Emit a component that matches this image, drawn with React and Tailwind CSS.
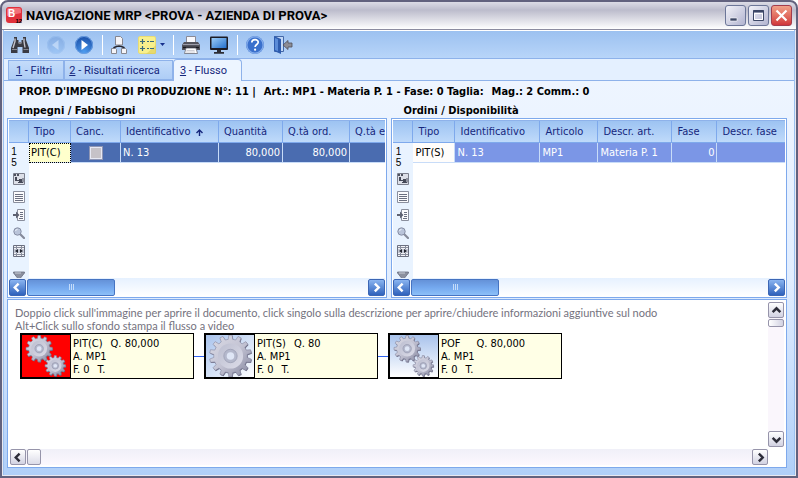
import React from "react";

function gearPath(cx, cy, inner, outer, teeth) {
  const pts = [];
  const step = (Math.PI * 2) / teeth;
  for (let i = 0; i < teeth; i++) {
    const a = i * step - Math.PI / 2;
    [
      [-0.3, inner],
      [-0.18, outer],
      [0.18, outer],
      [0.3, inner],
    ].forEach(([k, r]) => {
      const t = a + k * step;
      pts.push(`${(cx + Math.cos(t) * r).toFixed(2)} ${(cy + Math.sin(t) * r).toFixed(2)}`);
    });
  }
  return `M${pts.join("L")}Z`;
}

function Gear({ cx, cy, r, teeth }) {
  return (
    <g>
      <path d={gearPath(cx + 0.6, cy + 0.8, r * 0.8, r, teeth)} fill="#66667e" />
      <path d={gearPath(cx, cy, r * 0.8, r, teeth)} fill="url(#steel)" stroke="#8486a0" strokeWidth="0.6" />
      <circle cx={cx} cy={cy} r={r * 0.6} fill="url(#steelInner)" />
      <circle cx={cx} cy={cy} r={r * 0.32} fill="#b4b8cc" stroke="#9094aa" strokeWidth="0.6" />
      <circle cx={cx} cy={cy} r={r * 0.18} fill="#dfe6f6" />
    </g>
  );
}

function GearPicture({ kind }) {
  return (
    <svg viewBox="0 0 49 43" className="block h-full w-full">
      <defs>
        <linearGradient id="steel" x1="0" y1="0" x2="1" y2="1">
          <stop offset="0" stopColor="#dcdce6" />
          <stop offset="0.5" stopColor="#c4c4d4" />
          <stop offset="1" stopColor="#84869e" />
        </linearGradient>
        <linearGradient id="steelInner" x1="1" y1="1" x2="0" y2="0">
          <stop offset="0" stopColor="#dcdce8" />
          <stop offset="1" stopColor="#bcbed0" />
        </linearGradient>
      </defs>
      {kind === "single" ? (
        <Gear cx={25} cy={21.5} r={21.5} teeth={14} />
      ) : (
        <>
          <Gear cx={17.5} cy={14} r={13.5} teeth={12} />
          <Gear cx={34} cy={31.5} r={10.5} teeth={12} />
        </>
      )}
    </svg>
  );
}

/* ---------- toolbar icons ---------- */

const Binoculars = () => (
  <svg width="20" height="20" viewBox="0 0 20 20">
    <path d="M4 2h3v3h1.500v3h3V5H13V2h3v3l3 8v5h-6.500v-6h-5v6H1v-5l3-8z" fill="#3a3a42" />
    <path d="M5 3.500v3L3 13M14 3.500v3l1 6" stroke="#c4c4cc" strokeWidth="1.400" fill="none" />
    <path d="M2 14.500h5M13.500 14.500h5" stroke="#85858f" strokeWidth="1" />
    <path d="M8.500 7h3v2h-3z" fill="#85858f" />
  </svg>
);

const CircleArrow = ({ flip, faded }) => (
  <svg width="20" height="20" viewBox="0 0 20 20">
    <defs>
      <radialGradient id="orb" cx="0.5" cy="0.9" r="0.9">
        <stop offset="0" stopColor="#4d9cf0" />
        <stop offset="1" stopColor="#1a4fa8" />
      </radialGradient>
    </defs>
    <g opacity={faded ? 0.2 : 1}>
      <circle cx="10" cy="10" r="9" fill="url(#orb)" />
      <circle cx="10" cy="10" r="8.500" fill="none" stroke="#6ba0e4" strokeWidth="1" />
      <path d={flip ? "M12.500 5v10L6 10z" : "M7.500 5v10L14 10z"} fill="#fff" />
    </g>
  </svg>
);

const TreeIcon = () => (
  <svg width="18" height="20" viewBox="0 0 18 20">
    <path d="M9 9v3M4 14.500v-2L9 10.500l5 2v2" stroke="#26262e" strokeWidth="1.400" fill="none" />
    <path d="M5.500 1.500h5l2 2V10h-7z" fill="#f4f4f8" stroke="#86868f" />
    <path d="M1.500 13.500h4l1 1v4h-5zM11.500 13.500h4l1 1v4h-5z" fill="#f4f4f8" stroke="#86868f" />
  </svg>
);

const FormulaIcon = () => (
  <svg width="18" height="18" viewBox="0 0 18 18">
    <rect x="0.500" y="0.500" width="17" height="17" rx="1.500" fill="#f8f08c" stroke="#e8dc74" />
    <path d="M18 9v8a1 1 0 0 1-1 1H8z" fill="#dccb58" opacity="0.600" />
    <path d="M2 5.500h5M4.500 3v5M2 12.500h5M4.500 10v5M9 5.500h2M12 5.500h4M9 12.500h2M12 12.500h4" stroke="#386a7c" strokeWidth="1.200" />
  </svg>
);

const PrinterIcon = () => (
  <svg width="20" height="20" viewBox="0 0 20 20">
    <path d="M5.500 1.500h9V8h-9z" fill="#f8f8fc" stroke="#8a8a96" />
    <path d="M3 7h14l2 3v5H1v-5z" fill="#54545e" />
    <path d="M2 9.500h16" stroke="#9c9ca8" />
    <path d="M2 12.500h16" stroke="#18181e" strokeWidth="1.500" />
    <path d="M5 13h10l1.500 5.500h-13z" fill="#fff" stroke="#6b6b76" strokeWidth="0.800" />
    <path d="M5.500 15.500h8M5 17h9" stroke="#babac6" strokeWidth="0.700" />
  </svg>
);

const MonitorIcon = () => (
  <svg width="20" height="20" viewBox="0 0 20 20">
    <defs>
      <linearGradient id="screen" x1="0" y1="0" x2="1" y2="1">
        <stop offset="0" stopColor="#9ccdf8" />
        <stop offset="1" stopColor="#2470cc" />
      </linearGradient>
    </defs>
    <rect x="1" y="1.500" width="18" height="13.500" rx="1" fill="#1c1c24" />
    <rect x="2.500" y="3" width="15" height="10" fill="url(#screen)" />
    <path d="M8 15h4v2h3v1.800H5V17h3z" fill="#2c2c34" />
  </svg>
);

const HelpIcon = () => (
  <svg width="20" height="20" viewBox="0 0 20 20">
    <circle cx="10" cy="10" r="9" fill="#3a70cc" />
    <circle cx="10" cy="10" r="8.200" fill="none" stroke="#82abea" strokeWidth="1.400" />
    <path d="M6.800 7.600c0-4 6.600-3.800 6.400-.3-.1 2.200-3.100 2.200-3.100 4.700" fill="none" stroke="#fff" strokeWidth="1.700" />
    <circle cx="10.100" cy="14.700" r="1.100" fill="#fff" />
  </svg>
);

const ExitIcon = () => (
  <svg width="20" height="20" viewBox="0 0 20 20">
    <path d="M1.500 1.500h9v15h-9z" fill="#c2d8f6" stroke="#4468a8" />
    <path d="M1 1l7 3v15l-7-3z" fill="#2e5cae" />
    <path d="M2 3l3 1.300v12L2 15z" fill="#5b8cd8" />
    <path d="M10 10l5-4.500V8h4v4h-4v2.500z" fill="#8d8d96" stroke="#4e4e58" strokeWidth="0.800" />
  </svg>
);

/* ---------- grid side icons ---------- */

const CollapseIcon = () => (
  <svg width="12" height="12" viewBox="0 0 12 12">
    <path d="M0.500 0.500h11v11h-11z" fill="#dcdfe8" stroke="#7c808e" />
    <path d="M1 2h6" stroke="#4e5260" strokeWidth="2" strokeDasharray="2 1" />
    <path d="M2 4h2v4H2zM6 6h3v3H6z" fill="#454958" />
    <path d="M4 7.500h2M5 9.500h5V5" stroke="#454958" fill="none" />
  </svg>
);
const ListIcon = () => (
  <svg width="12" height="12" viewBox="0 0 12 12">
    <path d="M0.500 0.500h11v11h-11z" fill="#fbfbfd" stroke="#8a8f9e" />
    <path d="M2 3.500h8M2 5.500h8M2 7.500h8M2 9.500h8" stroke="#6a6f80" />
  </svg>
);
const ImportIcon = () => (
  <svg width="12" height="12" viewBox="0 0 12 12">
    <path d="M4.500 0.500h7v11h-7z" fill="#fbfbfd" stroke="#8a8f9e" />
    <path d="M7 3.500h3M7 5.500h3M7 7.500h3M6 9.500h4" stroke="#6a6f80" />
    <path d="M0 5h3V2.500L6.500 6 3 9.500V7H0z" fill="#5e6272" />
  </svg>
);
const LensIcon = () => (
  <svg width="12" height="12" viewBox="0 0 12 12">
    <path d="M7 7l4 4" stroke="#858a9a" strokeWidth="2.200" strokeLinecap="round" />
    <circle cx="4.500" cy="4.500" r="3.700" fill="#b9c4da" stroke="#868ea4" />
    <path d="M2.500 4a2 2 0 0 1 2-1.600" stroke="#eef3fb" fill="none" />
  </svg>
);
const FitIcon = () => (
  <svg width="12" height="12" viewBox="0 0 12 12">
    <path d="M0.500 0.500h11v11h-11z" fill="#f2f3f7" stroke="#6a6f80" />
    <path d="M1 2.500h10M1 9.500h10M3.500 1v10M8.500 1v10" stroke="#8a8f9e" />
    <path d="M1 4h10v4H1z" fill="#c4c8d4" />
    <path d="M2 6L5 4v4zM10 6L7 4v4z" fill="#22252f" />
  </svg>
);
const FunnelIcon = () => (
  <svg width="12" height="12" viewBox="0 0 12 12">
    <path d="M0.500 1h11v1L7.500 7v5h-3V7L0.500 2z" fill="#8b909f" stroke="#6a6f80" strokeWidth="0.800" />
    <path d="M2 2h6" stroke="#c9cdd8" />
  </svg>
);

function Chevron({ dir, className }) {
  const d = {
    left: "M6 1.500L2.500 5 6 8.500",
    right: "M3.500 1.500L7 5 3.500 8.500",
    up: "M1.500 6.500L5 3l3.500 3.500",
    down: "M1.500 3.500L5 7l3.500-3.500",
  }[dir];
  return (
    <svg width="11" height="11" viewBox="0 0 10 10" className={className}>
      <path d={d} fill="none" stroke="currentColor" strokeWidth="2.200" />
    </svg>
  );
}

/* ---------- toolbar ---------- */

const Divider = () => <span className="mr-[7px] ml-2 h-5 w-px bg-white" />;

function ToolButton({ label, disabled, children }) {
  return (
    <button type="button" aria-label={label} disabled={disabled} className="flex h-5 items-center justify-center">
      {children}
    </button>
  );
}

function Toolbar() {
  return (
    <div className="flex h-[29px] shrink-0 items-center border-t border-b border-t-white border-b-[#8eb2ea] bg-linear-to-b from-[#9cc1f0] to-[#b8d5f9] pl-[6px]">
      <ToolButton label="Cerca"><Binoculars /></ToolButton>
      <Divider />
      <ToolButton label="Precedente" disabled><CircleArrow flip faded /></ToolButton>
      <span className="w-2" />
      <ToolButton label="Successivo"><CircleArrow /></ToolButton>
      <Divider />
      <ToolButton label="Struttura"><TreeIcon /></ToolButton>
      <span className="w-[10px]" />
      <ToolButton label="Opzioni">
        <FormulaIcon />
        <svg width="5" height="3" viewBox="0 0 5 3" className="ml-1"><path d="M0 0h5L2.500 3z" fill="#17308c" /></svg>
      </ToolButton>
      <Divider />
      <ToolButton label="Stampa"><PrinterIcon /></ToolButton>
      <span className="w-2" />
      <ToolButton label="Anteprima"><MonitorIcon /></ToolButton>
      <Divider />
      <ToolButton label="Guida"><HelpIcon /></ToolButton>
      <span className="w-2" />
      <ToolButton label="Esci"><ExitIcon /></ToolButton>
    </div>
  );
}

/* ---------- title bar ---------- */

function TitleBar() {
  const button = "flex h-[21px] w-[21px] items-center justify-center rounded-[3px] border";
  const grey = `${button} border-[#6c7698] bg-linear-to-br from-[#f2f2f8] to-[#b2b4d0]`;
  return (
    <header className="flex h-7 shrink-0 items-center rounded-t-md border-b border-[#8c8ca0] bg-linear-to-b from-[#dcdce6] via-[#bcbccc] via-30% to-white pr-1 pl-1">
      <svg width="16" height="17" viewBox="0 0 16 17">
        <rect width="16" height="16" rx="3" fill="#e0313c" />
        <path d="M1 3a2 2 0 0 1 2-2h10a2 2 0 0 1 2 2v3L1 9z" fill="#f27078" />
        <text x="2" y="10" fontSize="10" fontWeight="700" fill="#fff" className="font-['Liberation_Sans',sans-serif]">B</text>
        <text x="9.500" y="16" fontSize="6" fontWeight="700" fill="#000" className="font-['Liberation_Sans',sans-serif]">12</text>
      </svg>
      <h1 className="ml-1 flex-1 truncate pt-px font-[Roboto,sans-serif] text-[13px] font-bold text-black">
        NAVIGAZIONE MRP &lt;PROVA - AZIENDA DI PROVA&gt;
      </h1>
      <div className="flex gap-[2px]">
        <button type="button" aria-label="Riduci a icona" className={grey}>
          <svg width="13" height="13" viewBox="0 0 13 13"><path d="M1 9h7v3H1z" fill="#3c4766" stroke="#fff" strokeWidth="0.600" /></svg>
        </button>
        <button type="button" aria-label="Ingrandisci" className={grey}>
          <svg width="13" height="13" viewBox="0 0 13 13"><path d="M1.500 1.500h10v10h-10z" fill="none" stroke="#3c4766" /><path d="M1 2.500h11" stroke="#3c4766" strokeWidth="2" /><path d="M2.500 4.500h8v6h-8z" fill="none" stroke="#fff" /></svg>
        </button>
        <button type="button" aria-label="Chiudi" className={`${button} border-[#a33c4c] bg-linear-to-b from-[#f0a088] to-[#d0343c]`}>
          <svg width="13" height="13" viewBox="0 0 13 13"><path d="M1.500 1.500l10 10M11.500 1.500l-10 10" stroke="#fff" strokeWidth="2.200" /></svg>
        </button>
      </div>
    </header>
  );
}

/* ---------- tabs ---------- */

function Tabs() {
  const idle = "h-5 border border-[#8eb2ea] bg-linear-to-b from-[#c4dcfa] to-[#aecdf6] pt-[2px]";
  return (
    <div role="tablist" className="flex h-[22px] shrink-0 items-end border-b border-[#8eb2ea] bg-[#e4f0ff] pl-1 font-[Roboto,sans-serif] text-[#15267c]">
      <button type="button" role="tab" aria-selected="false" className={`${idle} w-[56px] pr-1`}>
        <u>1</u> - Filtri
      </button>
      <button type="button" role="tab" aria-selected="false" className={`${idle} w-[109px] pr-2`}>
        <u>2</u> - Risultati ricerca
      </button>
      <button type="button" role="tab" aria-selected="true" className="-mb-px h-[22px] w-[69px] rounded-t-sm border border-b-0 border-[#8eb2ea] bg-[#edf5ff] pt-[2px] pr-2">
        <u>3</u> - Flusso
      </button>
    </div>
  );
}

/* ---------- data grids ---------- */

function GridScrollbar({ name }) {
  const button = "flex h-[17px] w-[17px] shrink-0 items-center justify-center rounded-[2px] border border-[#3c66b4] bg-linear-to-b from-[#8ab4f0] to-[#2f62bc] text-white";
  return (
    <div className="flex h-[18px] shrink-0 items-center gap-px bg-linear-to-b from-[#e6f1ff] to-white">
      <button type="button" aria-label={`${name}: scorri a sinistra`} className={button}><Chevron dir="left" /></button>
      <div className="flex h-[17px] w-[88px] items-center justify-center gap-px rounded-[2px] border border-[#4674c2] bg-linear-to-b from-[#6592d8] via-[#74a8ee] to-[#8cc0f8]">
        <span className="h-[6px] w-px bg-[#c4dcfa]" />
        <span className="h-[6px] w-px bg-[#c4dcfa]" />
        <span className="h-[6px] w-px bg-[#c4dcfa]" />
      </div>
      <span className="flex-1" />
      <button type="button" aria-label={`${name}: scorri a destra`} className={button}><Chevron dir="right" /></button>
    </div>
  );
}

const sideIcons = [CollapseIcon, ListIcon, ImportIcon, LensIcon, FitIcon];

function DataGrid({ name, columns, rowClass }) {
  return (
    <div className="border border-[#7ea9ec] bg-white p-px">
      <div className="flex h-[158px] overflow-hidden border-t border-[#8eb2ea]">
        <div className="flex w-5 shrink-0 flex-col items-center bg-[#e9f3ff]">
          <div className="h-[22px] w-full shrink-0 border-r border-b border-[#7ea9ec] bg-linear-to-b from-[#9dc3f2] to-[#bfdafa]" />
          <div className="w-full pt-[3px] pr-[10px] text-center font-['Liberation_Sans',sans-serif] text-[10px] leading-[11px] text-black">
            1<br />5
          </div>
          <div className="mt-[5px] flex flex-col gap-[6px]">
            {sideIcons.map((Icon, i) => (
              <button type="button" key={i} aria-label={`${name}: strumento ${i + 1}`}><Icon /></button>
            ))}
            <button type="button" aria-label={`${name}: filtro`} className="pt-2"><FunnelIcon /></button>
          </div>
        </div>
        <div className="min-w-0 flex-1 overflow-hidden">
          <table aria-label={name} className="w-full table-fixed border-separate border-spacing-0">
            <colgroup>
              {columns.map((c) => <col key={c.title} className={c.width} />)}
            </colgroup>
            <thead>
              <tr>
                {columns.map((c) => (
                  <th key={c.title} scope="col" className="h-[22px] overflow-hidden border-r border-b border-[#7ea9ec] bg-linear-to-b from-[#9dc3f2] to-[#bfdafa] p-0 pt-[2px] pl-[5px] text-left font-normal whitespace-nowrap text-[#15267c] last:border-r-0">
                    {c.title}
                    {c.sorted && (
                      <svg width="7" height="7" viewBox="0 0 7 7" className="ml-[6px] inline"><path d="M3.500 7V1M0.500 4l3-3 3 3" fill="none" stroke="#15267c" strokeWidth="1.400" /></svg>
                    )}
                  </th>
                ))}
              </tr>
            </thead>
            <tbody>
              <tr className={rowClass}>
                {columns.map((c) => (
                  <td key={c.title} className={`h-5 border-r border-b border-[#c8dcf8] p-0 px-[2px] pt-px whitespace-nowrap last:border-r-0 ${c.cell || ""}`}>
                    {c.check ? (
                      <input type="checkbox" aria-label="Canc." className="mx-auto block h-[14px] w-[14px] appearance-none border border-[#8f96b4] bg-[#c6c2c8] outline outline-[#e6e8f4] -outline-offset-2" />
                    ) : (
                      c.value
                    )}
                  </td>
                ))}
              </tr>
            </tbody>
          </table>
        </div>
      </div>
      <GridScrollbar name={name} />
    </div>
  );
}

const needs = [
  { title: "Tipo", width: "w-[42px]", value: "PIT(C)", cell: "bg-[#ffffcc] text-black outline-1 outline-dotted outline-black -outline-offset-1" },
  { title: "Canc.", width: "w-[50px]", check: true },
  { title: "Identificativo", width: "w-[98px]", value: "N. 13", sorted: true },
  { title: "Quantità", width: "w-[64px]", value: "80,000", cell: "text-right" },
  { title: "Q.tà ord.", width: "w-[67px]", value: "80,000", cell: "text-right" },
  { title: "Q.tà e", width: "w-auto", value: "" },
];

const orders = [
  { title: "Tipo", width: "w-[42px]", value: "PIT(S)", cell: "bg-[#fffdfb] text-black" },
  { title: "Identificativo", width: "w-[85px]", value: "N. 13" },
  { title: "Articolo", width: "w-[58px]", value: "MP1" },
  { title: "Descr. art.", width: "w-[74px]", value: "Materia P. 1" },
  { title: "Fase", width: "w-[45px]", value: "0", cell: "text-right" },
  { title: "Descr. fase", width: "w-auto", value: "" },
];

/* ---------- flow diagram ---------- */

const nodes = [
  { doc: "PIT(C)", qty: "Q. 80,000", kind: "double", bg: "bg-[#ff0000]", gap: "gap-2" },
  { doc: "PIT(S)", qty: "Q. 80", kind: "single", bg: "bg-linear-to-br from-[#a9c3ec] to-white", gap: "gap-2" },
  { doc: "POF", qty: "Q. 80,000", kind: "double", bg: "bg-linear-to-b from-[#a9c3ec] to-white", gap: "gap-4" },
];

function FlowNode({ doc, qty, kind, bg, gap }) {
  return (
    <div className="flex h-[46px] w-[174px] border border-black bg-[#ffffe6] text-black">
      <button type="button" aria-label={`Apri ${doc}`} className={`w-[50px] shrink-0 border border-black ${bg}`}>
        <GearPicture kind={kind} />
      </button>
      <button type="button" className="flex-1 pl-[2px] text-left leading-[13px]">
        <span className={`flex ${gap}`}><span>{doc}</span><span>{qty}</span></span>
        <span className="block">A. MP1</span>
        <span className="flex gap-2"><span>F. 0</span><span>T.</span></span>
      </button>
    </div>
  );
}

function FlowPanel() {
  const button = "flex h-4 w-4 shrink-0 items-center justify-center rounded-[2px] border border-[#9694aa] bg-linear-to-b from-white to-[#d2d2e2] text-[#2c2c38]";
  return (
    <section className="flex flex-1 flex-col border border-[#7ea9ec] bg-white p-[2px]">
      <div className="flex flex-1">
        <div className="min-w-0 flex-1 pt-1 pl-[5px]">
          <p className="font-[Lato,sans-serif] leading-[13px] text-[#74727e]">
            Doppio click sull'immagine per aprire il documento, click singolo sulla descrizione per aprire/chiudere informazioni aggiuntive sul nodo
            <br />
            Alt+Click sullo sfondo stampa il flusso a video
          </p>
          <div className="mt-px ml-[5px] flex items-center">
            {nodes.map((n, i) => (
              <React.Fragment key={n.doc}>
                {i > 0 && <span className="h-px w-[10px] bg-[#2f62ee]" />}
                <FlowNode {...n} />
              </React.Fragment>
            ))}
          </div>
        </div>
        <div className="flex w-4 shrink-0 flex-col bg-[#faf6fc]">
          <button type="button" aria-label="Scorri in alto" className={button}><Chevron dir="up" /></button>
          <span className="mt-px h-2 rounded-[2px] border border-[#9694aa] bg-linear-to-r from-white to-[#d2d2e2]" />
          <span className="flex-1" />
          <button type="button" aria-label="Scorri in basso" className={button}><Chevron dir="down" /></button>
        </div>
      </div>
      <div className="mt-[2px] mr-4 flex h-4 shrink-0 bg-linear-to-b from-[#f0f0f8] to-[#fcf8fe]">
        <button type="button" aria-label="Scorri a sinistra" className={button}><Chevron dir="left" /></button>
        <span className="ml-px w-[14px] rounded-[2px] border border-[#9694aa] bg-linear-to-b from-white to-[#dcdce8]" />
        <span className="flex-1" />
        <button type="button" aria-label="Scorri a destra" className={button}><Chevron dir="right" /></button>
      </div>
    </section>
  );
}

export default function App() {
  const gridTitle = "pt-[2px] pl-3 text-[11px] leading-[14px] font-bold text-black";
  return (
    <div className="flex min-h-screen flex-col rounded-t-lg border-2 border-[#62627e] bg-[#62627e] font-['DejaVu_Sans_Condensed','DejaVu_Sans',sans-serif] text-[11px]">
      <TitleBar />
      <main className="flex flex-1 flex-col border-x border-b border-[#e8e8f0] bg-[#9cc1f0] px-px">
        <Toolbar />
        <Tabs />
        <div className="flex flex-1 flex-col bg-linear-to-b from-[#eef5ff] via-[#e2eeff] via-50% to-[#b0cff8] pt-px pr-[7px] pb-[7px] pl-[3px]">
          <h2 className="pl-3 text-[11px] leading-5 font-bold text-black">
            <span>PROP. D'IMPEGNO DI PRODUZIONE N°: 11 |</span>
            <span className="ml-2">Art.: MP1 - Materia P. 1 - Fase: 0 Taglia:</span>
            <span className="ml-2">Mag.: 2 Comm.: 0</span>
          </h2>
          <div className="flex gap-1">
            <section className="min-w-0 flex-[380]">
              <h3 className={gridTitle}>Impegni / Fabbisogni</h3>
              <DataGrid name="Impegni / Fabbisogni" columns={needs} rowClass="bg-[#4a6cb0] text-white" />
            </section>
            <section className="min-w-0 flex-[395]">
              <h3 className={gridTitle}>Ordini / Disponibilità</h3>
              <DataGrid name="Ordini / Disponibilità" columns={orders} rowClass="bg-[#7b96e6] text-white" />
            </section>
          </div>
          <div className="flex flex-1 flex-col pt-px">
            <FlowPanel />
          </div>
        </div>
      </main>
    </div>
  );
}
